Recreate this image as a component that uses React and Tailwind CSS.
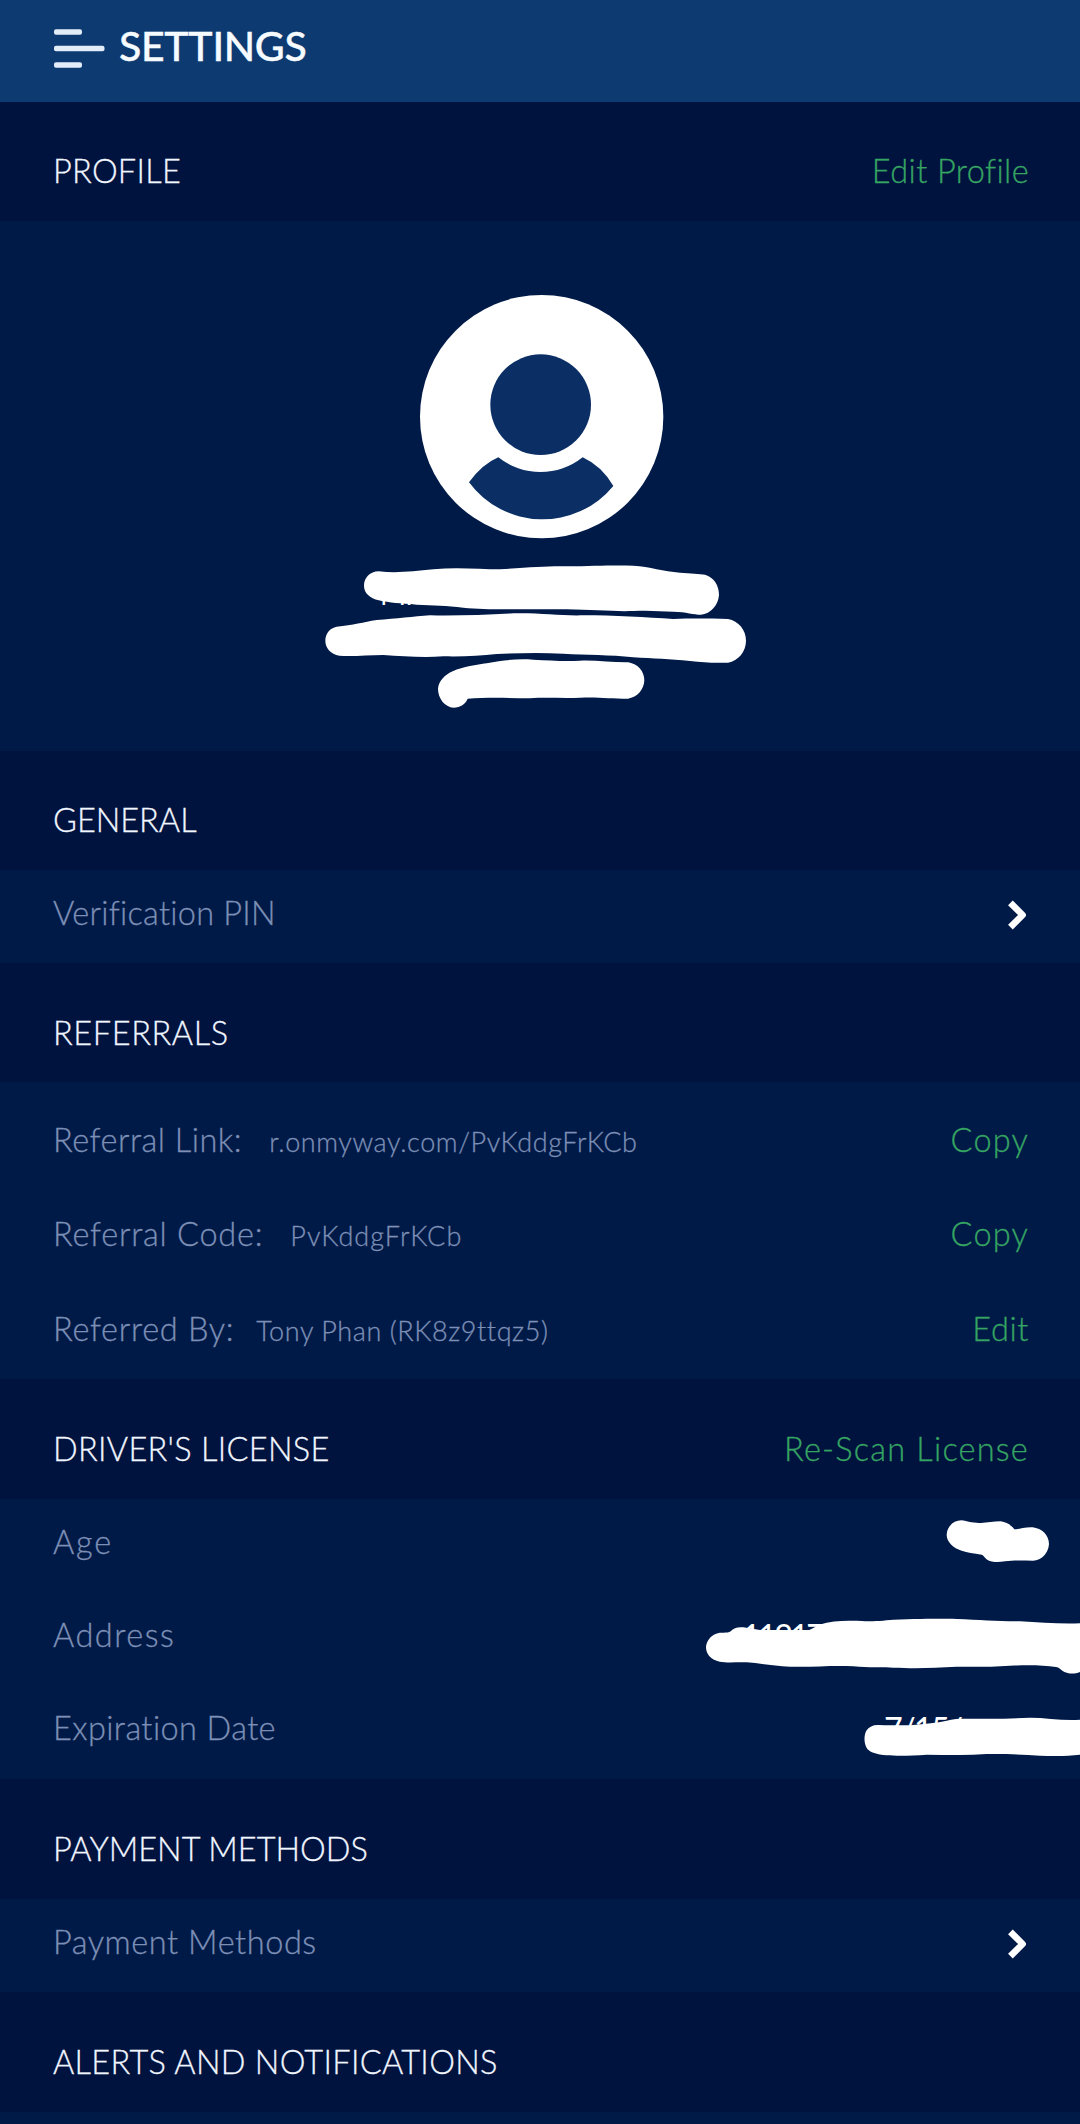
const LABEL = "text-[32.5px] leading-[40px] [-webkit-text-stroke:0.3px_currentColor]";
const MUTED = "text-[#7d8fb5]";
const GREEN = "text-[#36a562]";

function Section({ title, tracking, action, actionTracking, pad = "pt-[50px]", height = "h-[120px]" }) {
  return (
    <div className={`flex shrink-0 items-start justify-between bg-[#00123e] pl-[53px] pr-[51px] ${pad} ${height}`}>
      <h2 className={`whitespace-nowrap text-[#f1f6ff] ${LABEL} ${tracking}`}>{title}</h2>
      {action && <button className={`whitespace-nowrap ${GREEN} ${LABEL} ${actionTracking}`}>{action}</button>}
    </div>
  );
}

function Chevron() {
  return (
    <svg className="mt-[5px] h-[34px] w-[24px]" viewBox="0 0 24 34" fill="none" aria-hidden="true">
      <path d="M5.4 4.8 17.6 17 5.4 29.2" stroke="#fff" strokeWidth="6.6" strokeLinejoin="round" />
    </svg>
  );
}

function Row({ label, tracking, value, valueTracking, gap, action, actionTracking, chevron, height = "h-[93px]" }) {
  return (
    <div className={`flex items-start justify-between pl-[53px] pr-[51px] pt-[23px] ${height}`}>
      <div className={`flex items-baseline whitespace-nowrap ${MUTED}`}>
        <span className={`${LABEL} ${tracking}`}>{label}</span>
        {value && (
          <span className={`text-[27px] leading-[40px] [-webkit-text-stroke:0.3px_currentColor] ${gap} ${valueTracking}`}>{value}</span>
        )}
      </div>
      {action && <button className={`${GREEN} ${LABEL} ${actionTracking}`}>{action}</button>}
      {chevron && <Chevron />}
    </div>
  );
}

function ProfileArt() {
  return (
    <svg className="h-[460px] w-[480px]" viewBox="0 0 1440 1380" aria-hidden="true">
      <circle cx="725" cy="440" r="365" fill="#fff" />
      <circle cx="722" cy="404" r="151" fill="#0b2f64" />
      <path d="M507 637Q547 582 595 562A203 203 0 0 0 848 562Q905 588 940 648A275 275 0 0 1 507 637Z" fill="#0b2f64" />
      <g fill="#fff">
        <text x="240" y="1004" fontSize="84" fontWeight="400">Mi</text>
        <path d="M236 904C290 910 340 904 400 898C470 891 540 898 600 898C690 892 740 888 800 889C880 888 940 885 1000 887C1050 890 1090 904 1140 908C1170 911 1200 911 1215 914C1242 922 1257 946 1257 975C1255 1005 1232 1032 1203 1034C1180 1034 1160 1026 1120 1025C1080 1024 1050 1020 1000 1023C940 1025 880 1019 800 1018C740 1017 680 1018 620 1018C570 1018 530 1017 490 1013C440 1006 400 1007 350 1004C300 1000 270 999 236 991C210 984 192 970 192 947C192 924 210 904 236 904Z" />
        <path d="M110 1070C160 1066 190 1056 230 1050C290 1046 340 1040 390 1036C470 1038 560 1034 640 1030C720 1028 780 1038 850 1036C940 1036 1040 1042 1120 1047C1180 1045 1230 1046 1284 1047C1316 1053 1338 1080 1338 1112C1338 1145 1315 1172 1284 1178C1240 1179 1210 1178 1170 1173C1110 1168 1060 1165 1000 1162C930 1153 860 1156 790 1151C720 1147 650 1149 590 1152C540 1158 490 1160 430 1159C370 1163 310 1159 250 1155C200 1156 150 1160 118 1157C92 1152 76 1134 76 1112C76 1090 90 1074 110 1070Z" />
        <path d="M458 1204C490 1190 530 1184 560 1180C610 1170 650 1166 700 1169C750 1171 790 1175 840 1172C890 1170 940 1178 985 1177C1014 1182 1033 1204 1033 1231C1032 1259 1012 1282 984 1286C930 1286 890 1280 840 1283C790 1286 740 1281 690 1285C630 1284 560 1282 503 1286C496 1302 481 1313 461 1313C434 1311 414 1285 414 1256C416 1232 436 1214 458 1204Z" />
      </g>
    </svg>
  );
}

function Redactions() {
  return (
    <svg className="absolute top-0 right-0 h-[280px] w-[400px]" viewBox="0 297 1200 840" fill="#fff" aria-hidden="true">
      <text x="186" y="743" fontSize="97" fontWeight="400" letterSpacing="-8">11217</text>
      <text x="612" y="1022" fontSize="97" fontWeight="400" letterSpacing="-5">7/15/</text>
      <path d="M844 361C860 362 866 368 890 368C915 371 935 364 962 364C982 367 995 377 1003 388C1020 387 1035 381 1058 382C1085 385 1107 405 1107 432C1105 460 1085 481 1059 482C1030 482 1000 480 975 484C958 487 935 488 923 480C913 473 911 466 905 464C880 460 862 458 845 452C820 444 800 426 800 404C801 380 820 361 844 361Z" />
      <path d="M119 698C135 698 145 699 152 694C162 684 172 680 190 682L240 690H388C405 681 415 673 440 668C470 662 500 662 530 662C570 664 590 665 620 661C700 656 780 656 830 657C900 659 960 665 1020 664C1080 668 1140 672 1200 670V816C1180 824 1160 821 1147 812C1140 807 1138 803 1128 801C1090 795 1040 795 990 797C930 801 880 801 830 800C760 804 710 806 640 803C600 800 570 804 520 799C450 796 400 802 330 800C280 798 240 790 200 787C170 786 140 789 119 785C94 780 78 763 78 742C79 720 96 702 119 698Z" />
      <path d="M596 975C630 977 660 975 690 976C740 971 770 969 800 962C830 953 870 957 910 956C950 957 1000 955 1050 953C1100 953 1150 963 1200 959V1064C1160 1069 1120 1068 1080 1067C1030 1064 980 1061 920 1062C860 1067 800 1064 740 1064C690 1068 650 1068 620 1066C590 1064 570 1056 562 1047C551 1031 551 1005 560 991C568 980 580 974 596 975Z" />
    </svg>
  );
}

export default function App() {
  return (
    <main className="flex h-[2124px] w-[1080px] flex-col overflow-hidden bg-[#001a48] font-[Lato,sans-serif] font-light [font-kerning:normal]">
      <header className="flex h-[102px] shrink-0 items-start bg-[#0d3a71]">
        <svg className="mt-[28px] ml-[54px] h-[42px] w-[52px]" viewBox="0 0 52 42" fill="#e3edf9" aria-label="Menu">
          <rect x="0" y="1.2" width="28" height="5.6" rx="2" />
          <rect x="0" y="17.7" width="50.5" height="5.6" rx="2" />
          <rect x="0" y="34.2" width="28" height="5.6" rx="2" />
        </svg>
        <h1 className="mt-[22px] ml-[13px] text-[41px] leading-[48px] font-medium tracking-[-0.3px] text-[#f6fbff] [-webkit-text-stroke:0.4px_#f6fbff]">
          SETTINGS
        </h1>
      </header>

      <Section title="PROFILE" tracking="tracking-[0.25px]" action="Edit Profile" actionTracking="tracking-[0.4px]" pad="pt-[49px]" height="h-[119px]" />
      <section className="flex h-[530px] shrink-0 justify-center pt-[49px]">
        <ProfileArt />
      </section>

      <Section title="GENERAL" tracking="tracking-normal" pad="pt-[49px]" height="h-[119px]" />
      <section className="shrink-0">
        <Row label="Verification PIN" tracking="tracking-[0.25px]" chevron />
      </section>

      <Section title="REFERRALS" tracking="tracking-[0.6px]" height="h-[119px]" />
      <section className="h-[297px] shrink-0 pt-[15px]">
        <Row label="Referral Link:" tracking="tracking-[0.5px]" value="r.onmyway.com/PvKddgFrKCb" valueTracking="tracking-[0.6px]" gap="ml-[27px]" action="Copy" actionTracking="tracking-[1.2px]" height="h-[94px]" />
        <Row label="Referral Code:" tracking="tracking-[0.75px]" value="PvKddgFrKCb" valueTracking="tracking-[1.05px]" gap="ml-[27px]" action="Copy" actionTracking="tracking-[1.2px]" height="h-[95px]" />
        <Row label="Referred By:" tracking="tracking-[0.7px]" value="Tony Phan (RK8z9ttqz5)" valueTracking="tracking-[0.58px]" gap="ml-[22px]" action="Edit" actionTracking="tracking-[0.6px]" height="h-[93px]" />
      </section>

      <Section title="DRIVER'S LICENSE" tracking="tracking-[0.3px]" action="Re-Scan License" actionTracking="tracking-[1.2px]" />
      <section className="relative h-[280px] shrink-0">
        <Row label="Age" tracking="tracking-[1.8px]" />
        <Row label="Address" tracking="tracking-[1.5px]" />
        <Row label="Expiration Date" tracking="tracking-[0.4px]" />
        <Redactions />
      </section>

      <Section title="PAYMENT METHODS" tracking="tracking-normal" />
      <section className="shrink-0">
        <Row label="Payment Methods" tracking="tracking-[0.55px]" chevron />
      </section>

      <Section title="ALERTS AND NOTIFICATIONS" tracking="tracking-[0.3px]" />
    </main>
  );
}
